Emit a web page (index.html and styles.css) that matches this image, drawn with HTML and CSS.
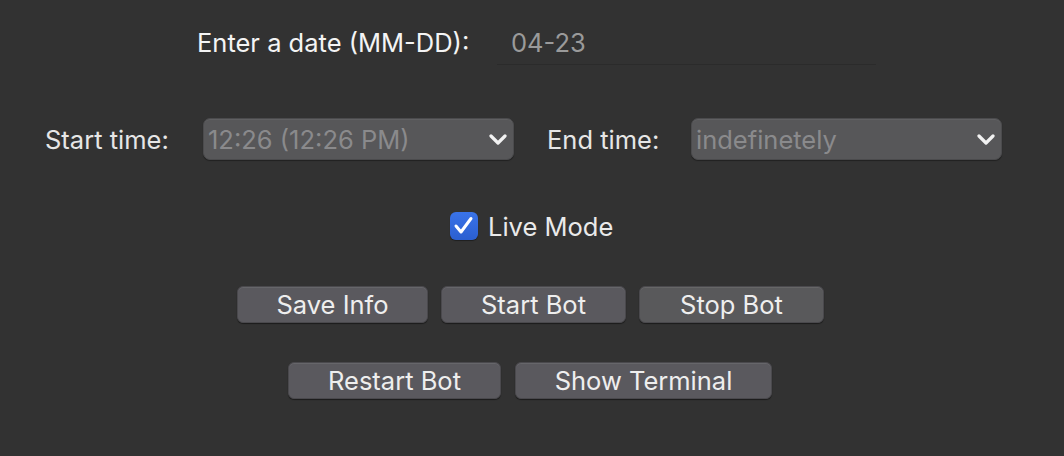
FILE: index.html
```html
<!DOCTYPE html>
<html>
<head>
<meta charset="utf-8">
<link rel="stylesheet" href="styles.css">
</head>
<body>
<div class="window">
  <div class="row row-date">
    <label class="date-label">Enter a date (MM-DD):</label>
    <div class="entry">04-23</div>
  </div>

  <div class="row row-times">
    <span class="time-label start-label">Start time:</span>
    <div class="select">
      <span class="select-text">12:26 (12:26 PM)</span>
      <svg class="chev" width="18" height="11" viewBox="0 0 18 11"><path d="M2 2 L9 9 L16 2" fill="none" stroke="#f2f2f2" stroke-width="3.2" stroke-linecap="round" stroke-linejoin="round"/></svg>
    </div>
    <span class="time-label end-label">End time:</span>
    <div class="select">
      <span class="select-text">indefinetely</span>
      <svg class="chev" width="18" height="11" viewBox="0 0 18 11"><path d="M2 2 L9 9 L16 2" fill="none" stroke="#f2f2f2" stroke-width="3.2" stroke-linecap="round" stroke-linejoin="round"/></svg>
    </div>
  </div>

  <div class="row row-check">
    <span class="checkbox">
      <svg width="28" height="28" viewBox="0 0 28 28"><path d="M6 14 L11 20 L21 6.5" fill="none" stroke="#ffffff" stroke-width="3" stroke-linecap="round" stroke-linejoin="round"/></svg>
    </span>
    <span class="check-label">Live Mode</span>
  </div>

  <div class="row row-btn1">
    <button class="btn w-save">Save Info</button>
    <button class="btn w-start">Start Bot</button>
    <button class="btn w-stop">Stop Bot</button>
  </div>

  <div class="row row-btn2">
    <button class="btn w-restart">Restart Bot</button>
    <button class="btn w-term">Show Terminal</button>
  </div>
</div>
</body>
</html>
```
FILE: styles.css
```css
html, body {
  margin: 0;
  padding: 0;
  background: #323232;
}
body {
  width: 1064px;
  height: 456px;
  overflow: hidden;
  font-family: "Inter", "Liberation Sans", sans-serif;
  font-size: 25.5px;
  font-weight: 400;
  color: #e8e8e8;
}
.window {
  display: flex;
  flex-direction: column;
}
.row {
  display: flex;
  align-items: center;
}
.row-date {
  margin-top: 20px;
  height: 45px;
  padding-left: 197px;
}
.date-label {
  width: 300px;
  color: #f4f4f4;
  line-height: 31px;
}
.entry {
  box-sizing: border-box;
  width: 379px;
  height: 45px;
  padding-left: 14px;
  display: flex;
  align-items: center;
  color: #9a9a9a;
  border-bottom: 1px solid #2b2b2b;
}
.row-times {
  margin-top: 53px;
  height: 42px;
  padding-left: 45px;
}
.time-label {
  color: #e6e6e6;
  line-height: 31px;
}
.start-label { width: 158px; }
.end-label { width: 144px; margin-left: 33px; }
.select {
  box-sizing: border-box;
  width: 311px;
  height: 42px;
  border-radius: 7px;
  background: #575759;
  border: 1px solid #4b4b4d;
  box-shadow: 0 1px 1px rgba(0,0,0,0.35), inset 0 1px 0 rgba(255,255,255,0.06);
  display: flex;
  align-items: center;
  justify-content: space-between;
  padding: 0 6px 0 4px;
}
.select-text {
  color: #8a8a8c;
  line-height: 31px;
}
.chev { display: block; margin-top: 1px; }
.row-check {
  margin-top: 52px;
  height: 28px;
  padding-left: 450px;
}
.checkbox {
  width: 28px;
  height: 28px;
  border-radius: 6px;
  background: linear-gradient(#3a73e8, #2b5fd0);
  box-shadow: 0 1px 1px rgba(0,0,0,0.4);
  display: block;
}
.checkbox svg { display: block; }
.check-label {
  margin-left: 10px;
  color: #eaeaea;
  line-height: 31px;
}
.row-btn1 {
  margin-top: 46px;
  height: 37px;
  padding-left: 237px;
  gap: 13px;
}
.row-btn2 {
  margin-top: 39px;
  height: 37px;
  padding-left: 288px;
  gap: 14px;
}
.btn {
  box-sizing: border-box;
  height: 37px;
  border-radius: 6px;
  background: #5a595e;
  border: 1px solid #4a494d;
  box-shadow: 0 1px 1px rgba(0,0,0,0.45), inset 0 1px 0 rgba(255,255,255,0.08);
  color: #eeeeee;
  font-family: inherit;
  font-size: 25.5px;
  font-weight: 400;
  line-height: 31px;
  padding: 0;
  margin: 0;
}
.w-save { width: 191px; }
.w-start { width: 185px; }
.w-stop { width: 185px; background: #59595b; }
.w-restart { width: 213px; }
.w-term { width: 257px; }
```
